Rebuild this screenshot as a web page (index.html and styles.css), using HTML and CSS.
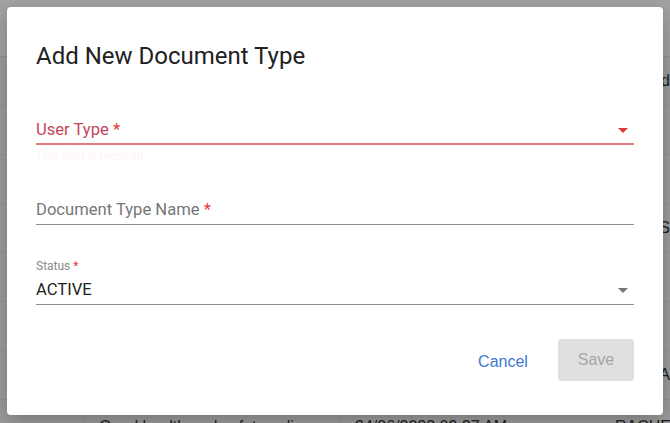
FILE: index.html
```html
<!DOCTYPE html>
<html lang="en">
<head>
<meta charset="utf-8">
<title>Add New Document Type</title>
<link rel="stylesheet" href="styles.css">
</head>
<body>
<div class="page">
  <div class="bg-header"></div>
  <div class="bg-table">
    <div class="bg-row"><span class="c1"></span><span class="c2"></span><span class="c3"></span><span class="c4">d</span></div>
    <div class="bg-row"><span class="c1"></span><span class="c2"></span><span class="c3"></span><span class="c4"></span></div>
    <div class="bg-row"><span class="c1"></span><span class="c2"></span><span class="c3"></span><span class="c4"></span></div>
    <div class="bg-row"><span class="c1"></span><span class="c2"></span><span class="c3"></span><span class="c4">S</span></div>
    <div class="bg-row"><span class="c1"></span><span class="c2"></span><span class="c3"></span><span class="c4"></span></div>
    <div class="bg-row"><span class="c1"></span><span class="c2"></span><span class="c3"></span><span class="c4"></span></div>
    <div class="bg-row"><span class="c1"></span><span class="c2"></span><span class="c3"></span><span class="c4">A</span></div>
    <div class="bg-row last"><span class="c1">Good health and safety policy</span><span class="c2">24/06/2022 09:27 AM</span><span class="c3">RACHEL</span><span class="c4"></span></div>
  </div>

  <div class="dialog">
    <h2 class="title">Add New Document Type</h2>

    <div class="field select error">
      <span class="value">User Type <span class="req">*</span></span>
      <svg class="arrow" width="10" height="5" viewBox="0 0 10 5"><path d="M0 0h10L5 5z"/></svg>
    </div>
    <div class="helper">This field is required</div>

    <div class="field text">
      <span class="value">Document Type Name <span class="req">*</span></span>
    </div>

    <div class="small-label">Status <span class="req">*</span></div>
    <div class="field select filled">
      <span class="value">ACTIVE</span>
      <svg class="arrow" width="10" height="5" viewBox="0 0 10 5"><path d="M0 0h10L5 5z"/></svg>
    </div>

    <div class="actions">
      <button class="btn cancel">Cancel</button>
      <button class="btn save" disabled>Save</button>
    </div>
  </div>
</div>
</body>
</html>
```

FILE: styles.css
```css
html, body {
  margin: 0;
  padding: 0;
}
body {
  width: 670px;
  height: 423px;
  overflow: hidden;
  background: #9c9c9c;
  font-family: Roboto, "Liberation Sans", Arial, sans-serif;
}
.page {
  position: relative;
  width: 670px;
  height: 423px;
  overflow: hidden;
}
.bg-header {
  height: 56px;
  background: #a3a3a3;
}
.bg-table {
  display: flex;
  flex-direction: column;
}
.bg-row {
  display: flex;
  height: 49px;
  align-items: center;
  border-top: 1px solid #939393;
  box-sizing: border-box;
  font-family: "Liberation Sans", Arial, sans-serif;
  font-size: 16px;
  color: #1c1c1c;
}
.bg-row.last {
  align-items: flex-start;
  padding-top: 18px;
}
.bg-row .c1 {
  box-sizing: border-box;
  border-left: 1px solid #909090;
  margin-left: 84px;
  width: 256px;
  padding-left: 14px;
  white-space: nowrap;
  overflow: hidden;
}
.bg-row .c2 {
  width: 275px;
  padding-left: 14px;
  box-sizing: border-box;
  border-left: 1px solid #909090;
  white-space: nowrap;
}
.bg-row .c3 {
  width: 48px;
  box-sizing: border-box;
  white-space: nowrap;
}
.bg-row .c4 {
  padding-left: 2px;
}

.dialog {
  position: absolute;
  left: 7px;
  top: 7px;
  width: 656px;
  height: 408px;
  box-sizing: border-box;
  background: #ffffff;
  border-radius: 4px;
  box-shadow: 0 6px 20px rgba(0, 0, 0, 0.25);
  padding: 35px 29px 34px 29px;
  display: flex;
  flex-direction: column;
}
.title {
  margin: 0;
  font-size: 24px;
  font-weight: 400;
  line-height: 28px;
  color: #212121;
}
.field {
  display: flex;
  align-items: center;
  justify-content: space-between;
  font-size: 16.6px;
  line-height: 26px;
  height: 26px;
  border-bottom: 1px solid #8d8d8d;
}
.field.error {
  margin-top: 47px;
  color: #c4465a;
  border-bottom: 2px solid #e07c7f;
}
.field.error .arrow {
  fill: #dc3b3b;
}
.field .arrow {
  fill: #757575;
  margin-right: 6px;
}
.helper {
  margin-top: 3px;
  font-size: 12px;
  line-height: 16px;
  color: #fdf5f5;
}
.field.text {
  margin-top: 33px;
  height: 27px;
  color: #777777;
}
.req {
  color: #e53935;
}
.small-label {
  margin-top: 34px;
  font-size: 12px;
  line-height: 14px;
  color: #8a8a8a;
}
.field.filled {
  margin-top: 4px;
  height: 28px;
  color: #212121;
}
.actions {
  margin-top: 34px;
  display: flex;
  justify-content: flex-end;
  align-items: center;
  gap: 22px;
}
.btn {
  font-family: "Liberation Sans", Arial, sans-serif;
  font-size: 16px;
  border: none;
  border-radius: 4px;
  height: 42px;
  padding: 0;
}
.cancel {
  background: transparent;
  color: #3c78cf;
  width: 66px;
  padding-top: 3px;
}
.save {
  background: #e0e0e0;
  color: #a6a6a6;
  width: 76px;
}
```
